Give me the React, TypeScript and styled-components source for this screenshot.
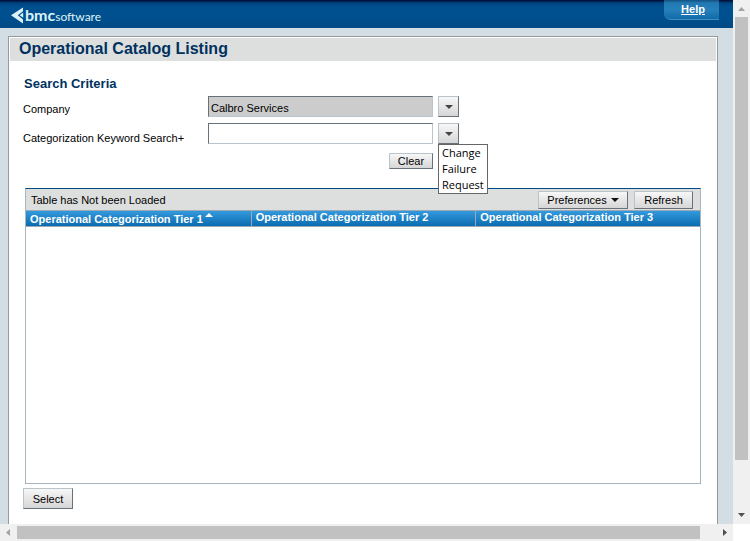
import React from "react";
import styled, { createGlobalStyle } from "styled-components";

const GlobalStyle = createGlobalStyle`
  * { box-sizing: border-box; }
  body {
    margin: 0;
    background: #ffffff;
    color: #000000;
    font: 11px/14px "Liberation Sans", Arial, sans-serif;
  }
  button, input { font: inherit; color: inherit; }
`;

const Frame = styled.div`
  display: grid;
  grid-template: minmax(0, 1fr) 17px / minmax(0, 1fr) 17px;
  height: 100vh;
`;

const Page = styled.div`
  display: flex;
  flex-direction: column;
  overflow: hidden;
  background: #d3dee4;
`;

const Header = styled.header`
  display: flex;
  flex: none;
  justify-content: space-between;
  align-items: flex-start;
  height: 28px;
  padding: 0 14px 0 11px;
  background: linear-gradient(#000c32 0, #001a46 1px, #00427f 3px, #00508f 7px, #00508f 17px, #004985 28px);
`;

const Logo = styled.svg`
  display: block;
  width: 100px;
  height: 28px;
`;

const HelpLink = styled.a`
  width: 55px;
  height: 20px;
  border-bottom: 1px solid #3f8ebf;
  border-bottom-left-radius: 7px;
  background: linear-gradient(#12507f 0, #2279b2 3px, #2680bb 10px, #116aa8 19px);
  color: #ffffff;
  font-weight: bold;
  line-height: 18px;
  padding-left: 3px;
  text-align: center;
`;

const Panel = styled.main`
  display: flex;
  flex: 1;
  flex-direction: column;
  min-height: 0;
  margin: 8px 15px 0 8px;
  padding: 1px 1px 0;
  border: 1px solid #999999;
  border-bottom: 0;
  background: #ffffff;
`;

const Title = styled.h1`
  flex: none;
  margin: 0;
  padding: 0 9px;
  height: 23px;
  background: #dddfde;
  color: #00315f;
  font-size: 16px;
  line-height: 22px;
`;

const SectionTitle = styled.h2`
  margin: 15px 0 4px 14px;
  color: #00315f;
  font-size: 13px;
  line-height: 16px;
`;

const Form = styled.form`
  display: grid;
  grid-template-columns: 180px minmax(100px, 225px) 21px;
  column-gap: 5px;
  row-gap: 6px;
  margin-left: 13px;
`;

const Label = styled.label<{ $drop: number }>`
  height: 21px;
  padding-top: ${(p) => p.$drop}px;
  white-space: nowrap;
`;

const TextBox = styled.input`
  width: 100%;
  height: 21px;
  padding: 3px 2px 0;
  border: 1px solid #68717a;
  border-right-color: #b9c4cb;
  border-bottom-color: #b9c4cb;
  border-radius: 0;
  outline: none;
  background: #ffffff;

  &:read-only { background: #cccccc; }
`;

const Combo = styled.div`
  position: relative;
  height: 21px;
`;

const Button = styled.button<{ $width: number; $height: number }>`
  display: inline-flex;
  flex: none;
  align-items: center;
  justify-content: center;
  gap: 4px;
  width: ${(p) => p.$width}px;
  height: ${(p) => p.$height}px;
  padding: 0;
  border: 1px solid #b9c4cb;
  border-right-color: #68717a;
  border-bottom-color: #68717a;
  background: linear-gradient(#f7f7f7, #d6d6d6);
  line-height: 14px;
`;

const ClearSlot = styled.div`
  grid-column: 2;
  display: flex;
  justify-content: flex-end;
  padding-top: 3px;
`;

const Menu = styled.ul`
  position: absolute;
  z-index: 1;
  top: 100%;
  left: 0;
  width: 50px;
  margin: 0;
  padding: 0;
  border: 1px solid #666666;
  background: #ffffff;
  list-style: none;
  font: 11px/16px "Open Sans", Tahoma, sans-serif;
`;

const MenuItem = styled.li`
  padding-left: 3px;
`;

const TableBox = styled.section`
  display: flex;
  flex: 1;
  flex-direction: column;
  min-height: 80px;
  margin: 19px 15px 4px;
  border: 1px solid #a9b5be;
  border-top-color: #004b87;
`;

const Toolbar = styled.div`
  display: flex;
  flex: none;
  align-items: center;
  gap: 6px;
  height: 21px;
  padding: 0 7px 0 5px;
  background: #dddfde;
`;

const Status = styled.span`
  flex: 1;
`;

const Table = styled.table`
  width: 100%;
  border-collapse: separate;
  border-spacing: 0;
  table-layout: fixed;
`;

const HeadCell = styled.th`
  height: 17px;
  padding: 0 4px;
  border: 0 solid #9aa9b3;
  border-width: 1px 0;
  background: linear-gradient(#3399dd, #0c6cb0);
  color: #ffffff;
  line-height: 13px;
  text-align: left;
  vertical-align: top;
  white-space: nowrap;

  & + & { border-left-width: 1px; }
  &[aria-sort] { padding-top: 2px; }
`;

const HeadText = styled.span`
  display: flex;
  height: 13px;
`;

const SortMark = styled.svg`
  flex: none;
  width: 8px;
  height: 4px;
  margin-left: 2px;
`;

const Footer = styled.footer`
  flex: none;
  height: 36px;
  padding-left: 13px;
`;

const ScrollTrack = styled.div<{ $across?: boolean }>`
  display: flex;
  flex-direction: ${(p) => (p.$across ? "row" : "column")};
  align-items: stretch;
  padding: ${(p) => (p.$across ? "2px 0" : "0 2px")};
  background: #f0f0f0;
`;

const ScrollArrow = styled.svg`
  flex: none;
  display: block;
`;

const Thumb = styled.div<{ $share: number }>`
  flex: ${(p) => p.$share};
  background: #c1c1c1;
`;

const Rest = styled.div<{ $share: number }>`
  flex: ${(p) => p.$share};
`;

const DownMark = ({ color = "#444444" }: { color?: string }) => (
  <svg width="8" height="4" viewBox="0 0 8 4" aria-hidden="true">
    <path d="M0 0h8L4 4z" fill={color} />
  </svg>
);

const BmcLogo = () => (
  <Logo viewBox="0 0 100 28" role="img" aria-label="bmcsoftware">
    <path d="M0 15.2 12 7.4v3.8L6.8 15.2 12 19.4v4z" fill="#ddf2f7" />
    <path d="M8.6 15.2 12.2 12.6v5.2z" fill="#ddf2f7" />
    <text x="14" y="21" fill="#ddf2f7" fontFamily="Lato, sans-serif" fontSize="16">
      <tspan fontWeight="bold">bmc</tspan>
      <tspan fontSize="12">software</tspan>
    </text>
  </Logo>
);

const keywords = ["Change", "Failure", "Request"];
const columns = ["Operational Categorization Tier 1", "Operational Categorization Tier 2", "Operational Categorization Tier 3"];

export default function App() {
  return (
    <>
      <GlobalStyle />
      <Frame>
        <Page>
          <Header>
            <BmcLogo />
            <HelpLink href="#help">Help</HelpLink>
          </Header>
          <Panel>
            <Title>Operational Catalog Listing</Title>
            <SectionTitle>Search Criteria</SectionTitle>
            <Form onSubmit={(e) => e.preventDefault()}>
              <Label htmlFor="company" $drop={6}>Company</Label>
              <TextBox id="company" defaultValue="Calbro Services" readOnly />
              <Button type="button" aria-label="Choose company" $width={21} $height={21}><DownMark /></Button>
              <Label htmlFor="keyword" $drop={8}>Categorization Keyword Search+</Label>
              <TextBox id="keyword" />
              <Combo>
                <Button type="button" aria-label="Choose keyword" aria-haspopup="true" $width={21} $height={21}><DownMark /></Button>
                <Menu>
                  {keywords.map((word) => <MenuItem key={word}>{word}</MenuItem>)}
                </Menu>
              </Combo>
              <ClearSlot>
                <Button type="reset" $width={44} $height={16}>Clear</Button>
              </ClearSlot>
            </Form>
            <TableBox>
              <Toolbar>
                <Status>Table has Not been Loaded</Status>
                <Button type="button" $width={90} $height={18}>Preferences <DownMark color="#111111" /></Button>
                <Button type="button" $width={59} $height={18}>Refresh</Button>
              </Toolbar>
              <Table>
                <thead>
                  <tr>
                    {columns.map((name, i) => (
                      <HeadCell key={name} scope="col" aria-sort={i === 0 ? "ascending" : undefined}>
                        <HeadText>
                          {name}
                          {i === 0 && <SortMark viewBox="0 0 8 4" aria-hidden="true"><path d="M0 4h8L4 0z" fill="#ffffff" /></SortMark>}
                        </HeadText>
                      </HeadCell>
                    ))}
                  </tr>
                </thead>
                <tbody />
              </Table>
            </TableBox>
            <Footer>
              <Button type="button" $width={50} $height={21}>Select</Button>
            </Footer>
          </Panel>
        </Page>
        <ScrollTrack aria-hidden="true">
          <ScrollArrow width="13" height="17" viewBox="0 0 13 17"><path d="M3 11h7L6.5 7z" fill="#a3a3a3" /></ScrollArrow>
          <Thumb $share={443} />
          <Rest $share={47} />
          <ScrollArrow width="13" height="17" viewBox="0 0 13 17"><path d="M3 6h7L6.5 10z" fill="#505050" /></ScrollArrow>
        </ScrollTrack>
        <ScrollTrack $across aria-hidden="true">
          <ScrollArrow width="17" height="13" viewBox="0 0 17 13"><path d="M10 3v7L6 6.5z" fill="#a3a3a3" /></ScrollArrow>
          <Thumb $share={683} />
          <Rest $share={16} />
          <ScrollArrow width="17" height="13" viewBox="0 0 17 13"><path d="M7 3v7L11 6.5z" fill="#505050" /></ScrollArrow>
        </ScrollTrack>
      </Frame>
    </>
  );
}
